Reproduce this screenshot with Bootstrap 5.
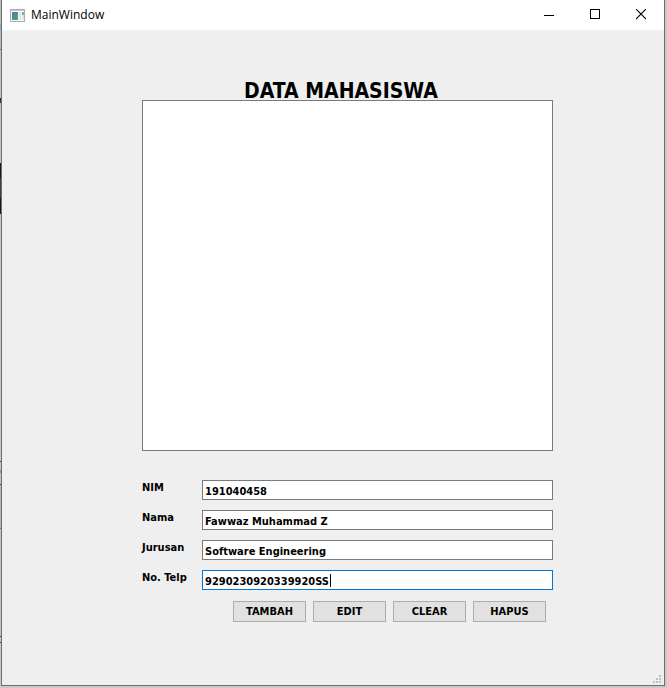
<!DOCTYPE html>
<html lang="id">
<head>
<meta charset="utf-8">
<meta name="viewport" content="width=device-width, initial-scale=1">
<title>MainWindow</title>
<link href="https://cdn.jsdelivr.net/npm/bootstrap@5.3.0/dist/css/bootstrap.min.css" rel="stylesheet">
<style>
  body {
    background: #c9c9c9;
    color: #000;
    font: bold 11px/16px "DejaVu Sans Condensed", "DejaVu Sans", sans-serif;
  }
  /* sliver of the desktop that shows left of the window */
  .desktop {
    padding: 0 2px 2px 1px;
    background: linear-gradient(#bdbdbd 0 24px, #7fb4bc 24px 30px, #b9b9b9 30px 49px, #777 49px 50px, #c4c4c4 50px 98px,
      #333 98px 103px, #c4c4c4 103px 163px, #16191d 163px 178px, #3a3d49 178px 198px, #16191d 198px 214px,
      #c9c9c9 214px 461px, #444 461px 462px, #c4c4c4 462px 470px, #5aa9c8 470px 473px, #c4c4c4 473px 484px,
      #444 484px 485px, #b5b5b5 485px 528px, #777 528px 529px, #c4c4c4 529px 636px, #444 636px 637px,
      #c4c4c4 637px 642px, #444 642px 643px, #c9c9c9 643px) 0 0 / 1px 100% no-repeat;
  }
  .app-window { background: #efefef; border: solid #6c6e6f; border-width: 0 1px 1px; }
  .titlebar { height: 30px; background: #fff; font: 12px/16px "Open Sans", "Noto Sans", sans-serif; }
  .titlebar-name { padding-left: 6px; }
  .win-btn { width: 46px; height: 30px; border: 0; background: transparent; }
  .content { padding: 53px 111px 63px 140px; }
  .heading { font-size: 21px; line-height: 17px; padding-right: 13px; font-weight: bold; }
  .data-view { background: #fff; border: 1px solid #7a7a7a; min-height: 120px; }
  .form-area { margin-top: 29px; gap: 10px; }
  .field-label { width: 60px; height: 16px; }
  .field-input.form-control {
    height: 20px; padding: 2px 2px 0; border: 1px solid #7a7a7a; border-radius: 0;
    background: #fff; color: #000; font: inherit; box-shadow: none;
  }
  .field-input.active-input { border-color: #0078d7; }
  .caret { position: absolute; left: 128px; top: 4px; width: 1px; height: 13px; background: #000; }
  .actions { gap: 7px; margin-top: 11px; padding-right: 7px; }
  .action-btn.btn {
    width: 73px; height: 21px; padding: 0; border: 1px solid #adadad; border-radius: 0;
    background: #e1e1e1; color: #000; font: inherit;
  }
  .size-grip { position: absolute; right: 3px; bottom: 2px; }
</style>
<script src="https://cdn.jsdelivr.net/npm/bootstrap@5.3.0/dist/js/bootstrap.bundle.min.js" defer></script>
</head>
<body>
<div class="desktop d-flex min-vh-100">
  <div class="app-window position-relative d-flex flex-column flex-grow-1">
    <header class="titlebar d-flex align-items-center">
      <svg class="ms-2" width="15" height="13" viewBox="0 0 15 13" aria-hidden="true" shape-rendering="crispEdges">
        <defs><linearGradient id="pane" x2="1" y2="1"><stop stop-color="#4c79a8"/><stop offset="1" stop-color="#4fa776"/></linearGradient></defs>
        <path fill="#a9adb2" d="M0 0h15v13H0z"/><path fill="#f7f8f9" d="M1 2h13v10H1z"/><path fill="#c9ccd0" d="M1 1h13v1H1z"/>
        <path fill="url(#pane)" d="M2 3h6v8H2z"/><path fill="#dfe3e5" d="M9 3h2v8H9z"/><path fill="#77aeb0" d="M12 3h2v3h-2z"/><path fill="#dce6e4" d="M12 6h2v5h-2z"/>
      </svg>
      <span class="titlebar-name flex-grow-1">MainWindow</span>
      <button type="button" class="win-btn d-flex align-items-center justify-content-center p-0" aria-label="Minimize"><svg width="10" height="11" viewBox="0 0 10 11" shape-rendering="crispEdges"><path d="M0 5h10v1H0z"/></svg></button>
      <button type="button" class="win-btn d-flex align-items-center justify-content-center p-0" aria-label="Maximize"><svg width="10" height="12" viewBox="0 0 10 12" shape-rendering="crispEdges"><path fill="none" stroke="#000" d="M.5 .5h9v9h-9z"/></svg></button>
      <button type="button" class="win-btn d-flex align-items-center justify-content-center p-0" aria-label="Close"><svg width="10" height="12" viewBox="0 0 10 12"><path stroke="#000" stroke-width="1.1" d="M0 0l10 10M10 0l-10 10"/></svg></button>
    </header>
    <main class="content d-flex flex-column flex-grow-1">
      <h1 class="heading text-center m-0">DATA MAHASISWA</h1>
      <div class="data-view flex-grow-1" role="region" aria-label="Data"></div>
      <form>
        <div class="form-area d-flex flex-column">
          <div class="d-flex"><label class="field-label flex-shrink-0" for="nim">NIM</label><input class="field-input form-control" id="nim" type="text" value="191040458"></div>
          <div class="d-flex"><label class="field-label flex-shrink-0" for="nama">Nama</label><input class="field-input form-control" id="nama" type="text" value="Fawwaz Muhammad Z"></div>
          <div class="d-flex"><label class="field-label flex-shrink-0" for="jurusan">Jurusan</label><input class="field-input form-control" id="jurusan" type="text" value="Software Engineering"></div>
          <div class="d-flex"><label class="field-label flex-shrink-0" for="telp">No. Telp</label>
            <div class="position-relative flex-grow-1"><input class="field-input active-input form-control" id="telp" type="text" value="9290230920339920SS"><span class="caret"></span></div></div>
        </div>
        <div class="actions d-flex justify-content-end">
          <button type="button" class="action-btn btn">TAMBAH</button>
          <button type="button" class="action-btn btn">EDIT</button>
          <button type="button" class="action-btn btn">CLEAR</button>
          <button type="button" class="action-btn btn">HAPUS</button>
        </div>
      </form>
    </main>
    <svg class="size-grip" width="8" height="8" viewBox="0 0 8 8" fill="#bfbfbf" shape-rendering="crispEdges" aria-hidden="true"><path d="M6 0h2v2H6zM3 3h2v2H3zM6 3h2v2H6zM0 6h2v2H0zM3 6h2v2H3zM6 6h2v2H6z"/></svg>
  </div>
</div>
</body>
</html>
